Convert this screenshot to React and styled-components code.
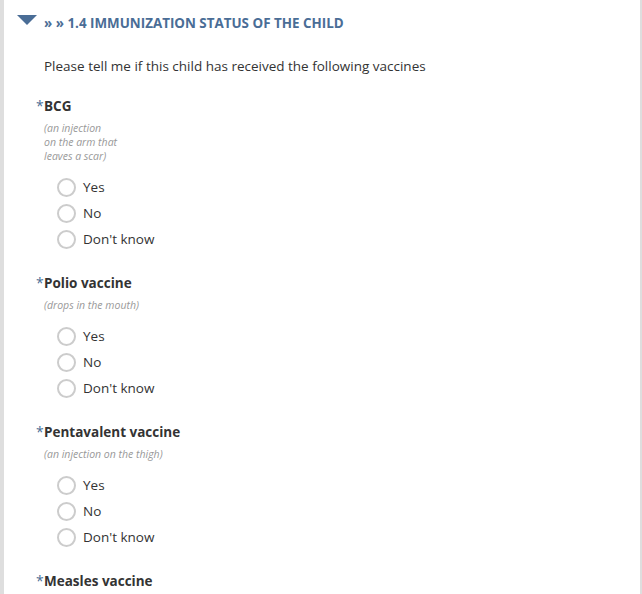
import React from 'react';
import styled, { createGlobalStyle } from 'styled-components';

const colors = {
  page: '#dedede',
  white: '#ffffff',
  heading: '#4a6d96',
  text: '#333333',
  hint: '#999999',
  radio: '#cccccc',
};

const GlobalStyle = createGlobalStyle`
  html, body {
    margin: 0;
    padding: 0;
    background: ${colors.page};
  }
  body {
    font-family: "Open Sans", "Noto Sans", sans-serif;
    color: ${colors.text};
  }
`;

const Panel = styled.div`
  background: ${colors.white};
  margin: 0 2px 0 4px;
  min-height: 100vh;
  padding: 13px 0 40px 0;
  box-sizing: border-box;
`;

const SectionHeader = styled.div`
  display: flex;
  align-items: center;
  gap: 7px;
  padding-left: 13px;
  height: 20px;
`;

const Caret = styled.span`
  width: 0;
  height: 0;
  border-left: 10px solid transparent;
  border-right: 10px solid transparent;
  border-top: 10px solid ${colors.heading};
  margin-top: -6px;
`;

const SectionTitle = styled.h2`
  margin: 0;
  font-size: 13.4px;
  font-weight: 700;
  line-height: 20px;
  color: ${colors.heading};
`;

const Intro = styled.p`
  margin: 23px 0 0 40px;
  font-size: 13.5px;
  line-height: 20px;
`;

const Question = styled.div`
  margin-top: ${(p) => (p.first ? 20 : 21)}px;
  padding-left: 32px;
`;

const Label = styled.div`
  display: flex;
  align-items: baseline;
  font-size: 13.5px;
  font-weight: 700;
  line-height: 20px;
`;

const Required = styled.span`
  color: ${colors.heading};
  font-weight: 400;
  font-size: 14px;
  width: 8px;
`;

const Hint = styled.div`
  margin: 5px 0 0 8px;
  font-size: 10.5px;
  font-style: italic;
  line-height: 14px;
  color: ${colors.hint};
`;

const Options = styled.div`
  margin-top: 11px;
  padding-left: 21px;
  display: flex;
  flex-direction: column;
`;

const Option = styled.label`
  display: flex;
  align-items: center;
  gap: 7px;
  height: 26px;
  font-size: 13.5px;
  cursor: pointer;
`;

const Radio = styled.span`
  width: 15px;
  height: 15px;
  border: 2px solid ${colors.radio};
  border-radius: 50%;
  background: ${colors.white};
`;

const questions = [
  { label: 'BCG', hint: ['(an injection', 'on the arm that', 'leaves a scar)'] },
  { label: 'Polio vaccine', hint: ['(drops in the mouth)'] },
  { label: 'Pentavalent vaccine', hint: ['(an injection on the thigh)'] },
  { label: 'Measles vaccine', hint: ['(an injection on the arm)'] },
];

const answers = ['Yes', 'No', "Don't know"];

const App = () => (
  <>
    <GlobalStyle />
    <Panel>
      <SectionHeader>
        <Caret />
        <SectionTitle>» » 1.4 IMMUNIZATION STATUS OF THE CHILD</SectionTitle>
      </SectionHeader>
      <Intro>Please tell me if this child has received the following vaccines</Intro>
      {questions.map((q, i) => (
        <Question key={q.label} first={i === 0}>
          <Label>
            <Required>*</Required>
            {q.label}
          </Label>
          <Hint>
            {q.hint.map((line) => (
              <div key={line}>{line}</div>
            ))}
          </Hint>
          <Options>
            {answers.map((a) => (
              <Option key={a}>
                <Radio />
                {a}
              </Option>
            ))}
          </Options>
        </Question>
      ))}
    </Panel>
  </>
);

export default App;
